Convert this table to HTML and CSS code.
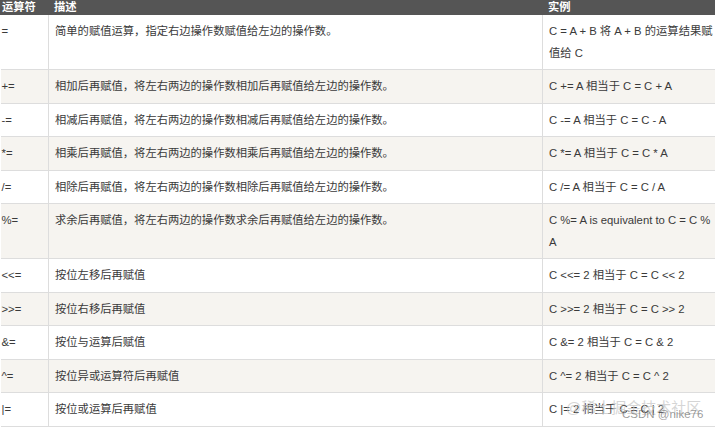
FILE: index.html
```html
<!DOCTYPE html>
<html lang="zh-CN">
<head>
<meta charset="utf-8">
<title>赋值运算符</title>
<link rel="stylesheet" href="styles.css">
</head>
<body>
<div class="page">
<table class="ops">
  <colgroup>
    <col class="c-op">
    <col class="c-desc">
    <col class="c-ex">
  </colgroup>
  <thead>
    <tr><th>运算符</th><th>描述</th><th>实例</th></tr>
  </thead>
  <tbody>
    <tr><td>=</td><td>简单的赋值运算，指定右边操作数赋值给左边的操作数。</td><td>C = A + B 将 A + B 的运算结果赋值给 C</td></tr>
    <tr><td>+=</td><td>相加后再赋值，将左右两边的操作数相加后再赋值给左边的操作数。</td><td>C += A 相当于 C = C + A</td></tr>
    <tr><td>-=</td><td>相减后再赋值，将左右两边的操作数相减后再赋值给左边的操作数。</td><td>C -= A 相当于 C = C - A</td></tr>
    <tr><td>*=</td><td>相乘后再赋值，将左右两边的操作数相乘后再赋值给左边的操作数。</td><td>C *= A 相当于 C = C * A</td></tr>
    <tr><td>/=</td><td>相除后再赋值，将左右两边的操作数相除后再赋值给左边的操作数。</td><td>C /= A 相当于 C = C / A</td></tr>
    <tr><td>%=</td><td>求余后再赋值，将左右两边的操作数求余后再赋值给左边的操作数。</td><td>C %= A is equivalent to C = C % A</td></tr>
    <tr><td>&lt;&lt;=</td><td>按位左移后再赋值</td><td>C &lt;&lt;= 2 相当于 C = C &lt;&lt; 2</td></tr>
    <tr><td>&gt;&gt;=</td><td>按位右移后再赋值</td><td>C &gt;&gt;= 2 相当于 C = C &gt;&gt; 2</td></tr>
    <tr><td>&amp;=</td><td>按位与运算后赋值</td><td>C &amp;= 2 相当于 C = C &amp; 2</td></tr>
    <tr><td>^=</td><td>按位异或运算符后再赋值</td><td>C ^= 2 相当于 C = C ^ 2</td></tr>
    <tr><td>|=</td><td>按位或运算后再赋值</td><td>C |= 2 相当于 C = C | 2</td></tr>
  </tbody>
</table>
<div class="wm wm-juejin">@稀土掘金技术社区</div>
<div class="wm wm-csdn">CSDN @nike76</div>
</div>
</body>
</html>
```

FILE: styles.css
```css
html, body {
  margin: 0;
  padding: 0;
  background: #ffffff;
}
body {
  width: 715px;
  height: 428px;
  overflow: hidden;
  font-family: "Liberation Sans", "Noto Sans CJK SC", sans-serif;
  font-size: 11.3px;
  color: #3a3a3a;
}
.page {
  position: relative;
  width: 715px;
  height: 428px;
  overflow: hidden;
}
.ops {
  border-collapse: collapse;
  table-layout: fixed;
  width: 722px;
}
.c-op { width: 48px; }
.c-desc { width: 494px; }
.c-ex { width: 180px; }
.ops th {
  background: #555555;
  color: #ffffff;
  font-weight: bold;
  text-align: left;
  height: 15px;
  line-height: 15px;
  padding: 0 5px;
  border-left: 1px solid #555555;
}
.ops th:first-child,
.ops td:first-child {
  padding-left: 1px;
}
.ops td {
  vertical-align: top;
  line-height: 21.5px;
  padding: 6px 5px 5px 6px;
  border: 1px solid #dddddd;
  border-top: none;
}
.ops td:first-child {
  border-left: none;
}
.ops tbody tr:nth-child(even) td {
  background: #f6f4f0;
}
.wm {
  position: absolute;
  white-space: nowrap;
}
.wm-juejin {
  left: 566px;
  top: 396px;
  font-size: 15px;
  color: rgba(200, 200, 200, 0.75);
}
.wm-csdn {
  left: 622px;
  top: 408px;
  font-size: 11.5px;
  color: rgba(110, 110, 110, 0.7);
}
```
